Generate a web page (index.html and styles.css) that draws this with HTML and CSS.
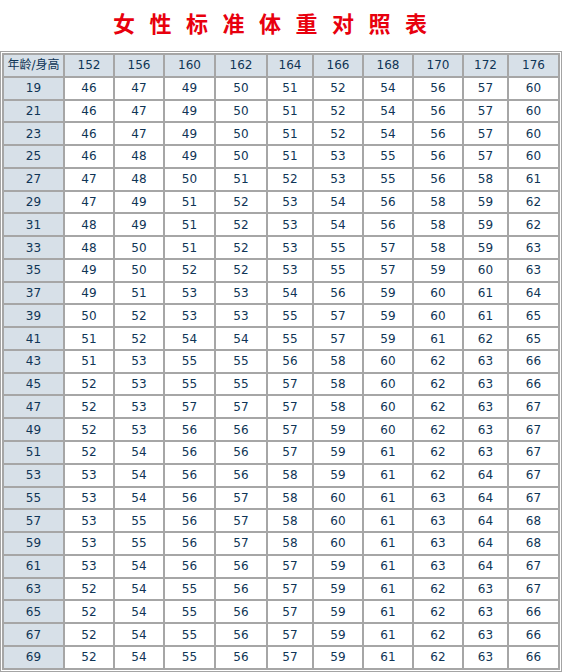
FILE: index.html
```html
<!DOCTYPE html>
<html lang="zh-CN">
<head>
<meta charset="utf-8">
<title>女性标准体重对照表</title>
<link rel="stylesheet" href="styles.css">
</head>
<body>
<h1 class="title">女性标准体重对照表</h1>
<div class="frame">
<table class="weights">
<colgroup>
<col class="w-age"><col class="w48"><col class="w48"><col class="w49"><col class="w50"><col class="w44"><col class="w48"><col class="w48"><col class="w48"><col class="w43"><col class="w49">
</colgroup>
<thead>
<tr><th>年龄/身高</th><th>152</th><th>156</th><th>160</th><th>162</th><th>164</th><th>166</th><th>168</th><th>170</th><th>172</th><th>176</th></tr>
</thead>
<tbody>
<tr><th>19</th><td>46</td><td>47</td><td>49</td><td>50</td><td>51</td><td>52</td><td>54</td><td>56</td><td>57</td><td>60</td></tr>
<tr><th>21</th><td>46</td><td>47</td><td>49</td><td>50</td><td>51</td><td>52</td><td>54</td><td>56</td><td>57</td><td>60</td></tr>
<tr><th>23</th><td>46</td><td>47</td><td>49</td><td>50</td><td>51</td><td>52</td><td>54</td><td>56</td><td>57</td><td>60</td></tr>
<tr><th>25</th><td>46</td><td>48</td><td>49</td><td>50</td><td>51</td><td>53</td><td>55</td><td>56</td><td>57</td><td>60</td></tr>
<tr><th>27</th><td>47</td><td>48</td><td>50</td><td>51</td><td>52</td><td>53</td><td>55</td><td>56</td><td>58</td><td>61</td></tr>
<tr><th>29</th><td>47</td><td>49</td><td>51</td><td>52</td><td>53</td><td>54</td><td>56</td><td>58</td><td>59</td><td>62</td></tr>
<tr><th>31</th><td>48</td><td>49</td><td>51</td><td>52</td><td>53</td><td>54</td><td>56</td><td>58</td><td>59</td><td>62</td></tr>
<tr><th>33</th><td>48</td><td>50</td><td>51</td><td>52</td><td>53</td><td>55</td><td>57</td><td>58</td><td>59</td><td>63</td></tr>
<tr><th>35</th><td>49</td><td>50</td><td>52</td><td>52</td><td>53</td><td>55</td><td>57</td><td>59</td><td>60</td><td>63</td></tr>
<tr><th>37</th><td>49</td><td>51</td><td>53</td><td>53</td><td>54</td><td>56</td><td>59</td><td>60</td><td>61</td><td>64</td></tr>
<tr><th>39</th><td>50</td><td>52</td><td>53</td><td>53</td><td>55</td><td>57</td><td>59</td><td>60</td><td>61</td><td>65</td></tr>
<tr><th>41</th><td>51</td><td>52</td><td>54</td><td>54</td><td>55</td><td>57</td><td>59</td><td>61</td><td>62</td><td>65</td></tr>
<tr><th>43</th><td>51</td><td>53</td><td>55</td><td>55</td><td>56</td><td>58</td><td>60</td><td>62</td><td>63</td><td>66</td></tr>
<tr><th>45</th><td>52</td><td>53</td><td>55</td><td>55</td><td>57</td><td>58</td><td>60</td><td>62</td><td>63</td><td>66</td></tr>
<tr><th>47</th><td>52</td><td>53</td><td>57</td><td>57</td><td>57</td><td>58</td><td>60</td><td>62</td><td>63</td><td>67</td></tr>
<tr><th>49</th><td>52</td><td>53</td><td>56</td><td>56</td><td>57</td><td>59</td><td>60</td><td>62</td><td>63</td><td>67</td></tr>
<tr><th>51</th><td>52</td><td>54</td><td>56</td><td>56</td><td>57</td><td>59</td><td>61</td><td>62</td><td>63</td><td>67</td></tr>
<tr><th>53</th><td>53</td><td>54</td><td>56</td><td>56</td><td>58</td><td>59</td><td>61</td><td>62</td><td>64</td><td>67</td></tr>
<tr><th>55</th><td>53</td><td>54</td><td>56</td><td>57</td><td>58</td><td>60</td><td>61</td><td>63</td><td>64</td><td>67</td></tr>
<tr><th>57</th><td>53</td><td>55</td><td>56</td><td>57</td><td>58</td><td>60</td><td>61</td><td>63</td><td>64</td><td>68</td></tr>
<tr><th>59</th><td>53</td><td>55</td><td>56</td><td>57</td><td>58</td><td>60</td><td>61</td><td>63</td><td>64</td><td>68</td></tr>
<tr><th>61</th><td>53</td><td>54</td><td>56</td><td>56</td><td>57</td><td>59</td><td>61</td><td>63</td><td>64</td><td>67</td></tr>
<tr><th>63</th><td>52</td><td>54</td><td>55</td><td>56</td><td>57</td><td>59</td><td>61</td><td>62</td><td>63</td><td>67</td></tr>
<tr><th>65</th><td>52</td><td>54</td><td>55</td><td>56</td><td>57</td><td>59</td><td>61</td><td>62</td><td>63</td><td>66</td></tr>
<tr><th>67</th><td>52</td><td>54</td><td>55</td><td>56</td><td>57</td><td>59</td><td>61</td><td>62</td><td>63</td><td>66</td></tr>
<tr><th>69</th><td>52</td><td>54</td><td>55</td><td>56</td><td>57</td><td>59</td><td>61</td><td>62</td><td>63</td><td>66</td></tr>
</tbody>
</table>
</div>
</body>
</html>
```
FILE: styles.css
```css
html, body {
  margin: 0;
  padding: 0;
  background: #ffffff;
}

body {
  width: 562px;
  font-family: "DejaVu Sans", Verdana, "Noto Sans CJK SC", sans-serif;
}

.title {
  margin: 0;
  height: 51px;
  box-sizing: border-box;
  padding: 7px 22px 0 0;
  text-align: center;
  font-family: "Noto Sans CJK SC", sans-serif;
  font-size: 22px;
  line-height: 30px;
  font-weight: 700;
  letter-spacing: 14.5px;
  text-indent: 14.5px;
  color: #e8000e;
}

.frame {
  width: 560px;
  border: 1px solid #a4a4a4;
  background: #ffffff;
  padding: 1px;
  box-sizing: border-box;
  width: 562px;
}

.weights {
  table-layout: fixed;
  width: 558px;
  border-collapse: separate;
  border-spacing: 2px;
  background: #a6a6a6;
  font-size: 12px;
  color: #0f3556;
}

.w-age { width: 59px; }
.w43 { width: 43px; }
.w44 { width: 44px; }
.w48 { width: 48px; }
.w49 { width: 49px; }
.w50 { width: 50px; }

.weights th,
.weights td {
  height: 20.77px;
  padding: 0;
  text-align: center;
  vertical-align: middle;
  font-weight: normal;
  line-height: 14px;
  white-space: nowrap;
  box-sizing: border-box;
}

.weights td {
  background: #ffffff;
}

.weights th {
  background: #d7e0e8;
}

.weights thead th {
  font-family: "DejaVu Sans", "Noto Sans CJK SC", sans-serif;
}
```
